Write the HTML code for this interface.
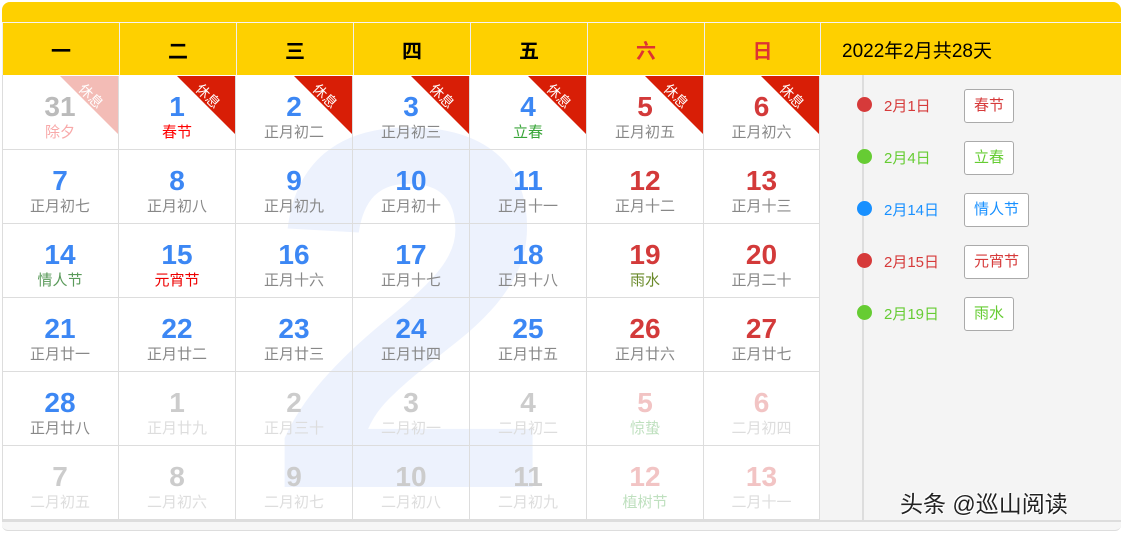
<!DOCTYPE html>
<html><head><meta charset="utf-8"><style>
*{margin:0;padding:0;box-sizing:border-box}
html,body{width:1123px;height:533px;overflow:hidden}
body{background:#fff;position:relative;font-family:"Liberation Sans","Noto Sans CJK SC",sans-serif}
.top{position:absolute;left:2px;top:2px;width:1119px;height:21px;background:#fed000;border-radius:8px 8px 0 0;border-bottom:1px solid #f4f4f4}
.hd{position:absolute;top:23px;height:52px;background:#fed000;font-size:20px;font-weight:bold;display:flex;align-items:center;justify-content:center;border-left:1px solid #eee}
.cell{position:absolute;width:117px;height:74px;border-right:1px solid #ddd;border-bottom:1px solid #ddd;text-align:center;overflow:hidden}
.n{position:absolute;left:0;right:0;top:14px;font-size:28px;font-weight:bold;line-height:34px;color:#3c87f4}
.l{position:absolute;left:0;right:0;top:48px;font-size:15px;line-height:18px;color:#888}
.rb{position:absolute;right:0;top:0;width:58px;height:58px;background:#d81e06;clip-path:polygon(0 0,100% 0,100% 100%)}
.rt{position:absolute;right:2px;top:12px;width:50px;font-size:14px;color:#fff;transform:rotate(45deg);text-align:center;line-height:16px}
.side{position:absolute;left:820px;top:75px;width:301px;height:445px;background:#f4f4f4}
.dot{position:absolute;left:857px;width:15px;height:15px;border-radius:50%}
.dt{position:absolute;left:884px;font-size:15px;line-height:18px}
.tag{position:absolute;left:964px;height:34px;border:1px solid #aaa;border-radius:3px;background:#fff;font-size:15px;line-height:32px;padding:0 9px}
</style></head><body>
<div class="top"></div>
<div class="hd" style="left:2px;width:117px">一</div>
<div class="hd" style="left:119px;width:117px">二</div>
<div class="hd" style="left:236px;width:117px">三</div>
<div class="hd" style="left:353px;width:117px">四</div>
<div class="hd" style="left:470px;width:117px">五</div>
<div class="hd" style="left:587px;width:117px;color:#d33">六</div>
<div class="hd" style="left:704px;width:116px;color:#d33">日</div>
<div class="hd" style="left:820px;width:301px;justify-content:flex-start;padding-left:21px;font-weight:normal;font-size:19px">2022年2月共28天</div>
<div class="side"></div>
<div style="position:absolute;left:2px;top:520px;width:1119px;height:11px;background:#f6f6f6;border-top:2px solid #ddd;border-bottom:1px solid #ddd;border-radius:0 0 6px 6px"></div>
<svg style="position:absolute;left:0;top:0" width="1123" height="533"><text x="410" y="487" text-anchor="middle" font-family="Liberation Sans" font-weight="bold" font-size="515" fill="#edf2fd">2</text></svg>
<div style="position:absolute;left:2px;top:75px;width:1px;height:445px;background:#ddd"></div>
<div id="cells"></div>
<div style="position:absolute;left:862px;top:75px;width:2px;height:445px;background:#ddd"></div>
<div class="dot" style="top:97px;background:#d63a3a"></div><div class="dt" style="top:98px;color:#d63a3a">2月1日</div><div class="tag" style="top:89px;color:#d63a3a">春节</div>
<div class="dot" style="top:149px;background:#66cc33"></div><div class="dt" style="top:150px;color:#66cc33">2月4日</div><div class="tag" style="top:141px;color:#66cc33">立春</div>
<div class="dot" style="top:201px;background:#1890ff"></div><div class="dt" style="top:202px;color:#1890ff">2月14日</div><div class="tag" style="top:193px;color:#1890ff">情人节</div>
<div class="dot" style="top:253px;background:#d63a3a"></div><div class="dt" style="top:254px;color:#d63a3a">2月15日</div><div class="tag" style="top:245px;color:#d63a3a">元宵节</div>
<div class="dot" style="top:305px;background:#66cc33"></div><div class="dt" style="top:306px;color:#66cc33">2月19日</div><div class="tag" style="top:297px;color:#66cc33">雨水</div>
<div style="position:absolute;left:900px;top:485px;font-size:23px;color:#222;text-shadow:1px 1px 0 #fff,-1px -1px 0 #fff">头条 @巡山阅读</div>
<script>
var d=[
["31","除夕","#bbb","#f8a9a9",2],["1","春节","","#f00",1],["2","正月初二","","",1],["3","正月初三","","",1],["4","立春","","#3aa63a",1],["5","正月初五","R","",1],["6","正月初六","R","",1],
["7","正月初七"],["8","正月初八"],["9","正月初九"],["10","正月初十"],["11","正月十一"],["12","正月十二","R"],["13","正月十三","R"],
["14","情人节","","#5a9a5a"],["15","元宵节","","#e00"],["16","正月十六"],["17","正月十七"],["18","正月十八"],["19","雨水","R","#6a8a2a"],["20","正月二十","R"],
["21","正月廿一"],["22","正月廿二"],["23","正月廿三"],["24","正月廿四"],["25","正月廿五"],["26","正月廿六","R"],["27","正月廿七","R"],
["28","正月廿八"],["1","正月廿九","#ccc","#ddd"],["2","正月三十","#ccc","#ddd"],["3","二月初一","#ccc","#ddd"],["4","二月初二","#ccc","#ddd"],["5","惊蛰","#f2c4c4","#bfe0bf"],["6","二月初四","#f2c4c4","#ddd"],
["7","二月初五","#ccc","#ddd"],["8","二月初六","#ccc","#ddd"],["9","二月初七","#ccc","#ddd"],["10","二月初八","#ccc","#ddd"],["11","二月初九","#ccc","#ddd"],["12","植树节","#f2c4c4","#bfe0bf"],["13","二月十一","#f2c4c4","#ddd"]];
var h="";
d.forEach(function(c,i){var r=Math.floor(i/7),k=i%7;var x=2+k*117,y=76+r*74;
var nc=c[2]=="R"?"#d33a3a":(c[2]||"#3c87f4");var lc=c[3]||"#888";
h+='<div class="cell" style="left:'+x+'px;top:'+y+'px;'+(k==6?'width:116px;':'')+'">';
if(c[4])h+='<div class="rb" style="'+(c[4]==2?'background:#f3bcb6':'')+'"></div><div class="rt">休息</div>';
h+='<div class="n" style="color:'+nc+'">'+c[0]+'</div><div class="l" style="color:'+lc+'">'+c[1]+'</div></div>';});
document.getElementById("cells").innerHTML=h;
</script>
</body></html>
